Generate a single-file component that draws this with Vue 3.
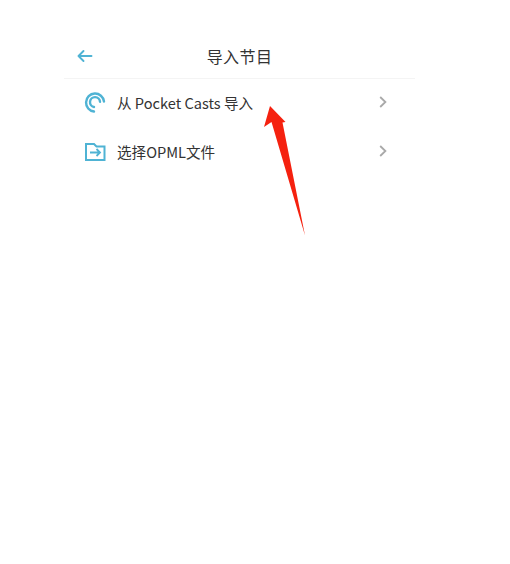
<script setup>
const rows = [
  { id: 'pc', label: '从 Pocket Casts 导入' },
  { id: 'opml', label: '选择OPML文件' },
]
</script>

<template>
  <div class="page">
    <div class="panel">
      <header class="head">
        <svg class="back" width="18" height="14" viewBox="0 0 18 14">
          <path d="M15.5 7H2.5M7.5 2L2.5 7L7.5 12" fill="none" stroke="#4fb3d4" stroke-width="1.9" stroke-linecap="round" stroke-linejoin="round" />
        </svg>
        <span class="title">导入节目</span>
      </header>
      <ul class="list">
        <li v-for="r in rows" :key="r.id" class="row">
          <svg v-if="r.id === 'pc'" class="icon" width="22" height="22" viewBox="0 0 22 22">
            <path d="M10 20.5A9 9 0 1 1 20 10.5" fill="none" stroke="#4fb3d4" stroke-width="2.4" stroke-linecap="round" />
            <path d="M10 16A5 5 0 1 1 16 10.8" fill="none" stroke="#4fb3d4" stroke-width="2.4" stroke-linecap="round" />
          </svg>
          <svg v-else class="icon" width="22" height="22" viewBox="0 0 22 22">
            <path d="M2 20V4H10L12.5 6.5H20.5V20Z" fill="none" stroke="#4fb3d4" stroke-width="2" stroke-linejoin="miter" />
            <path d="M6 12.5H16M12.5 9L16 12.5L12.5 16" fill="none" stroke="#4fb3d4" stroke-width="1.8" />
          </svg>
          <span class="label">{{ r.label }}</span>
          <svg class="chev" width="8" height="12" viewBox="0 0 8 12">
            <path d="M1.2 1L6.4 6L1.2 11" fill="none" stroke="#a9a9a9" stroke-width="1.8" />
          </svg>
        </li>
      </ul>
    </div>
    <svg class="arrow" width="50" height="135" viewBox="0 0 50 135">
      <path d="M10 1L4 22L11.5 17L45 130.5L22.5 17.5L25.5 17Z" fill="#f5210f" />
    </svg>
  </div>
</template>

<style scoped>
.page {
  position: relative;
  width: 510px;
  height: 564px;
  background: #fff;
  overflow: hidden;
  font-family: "Noto Sans CJK SC", "Noto Sans", sans-serif;
}
.panel {
  width: 351px;
  margin-left: 64px;
  padding-top: 35px;
}
.head {
  position: relative;
  height: 43px;
  display: flex;
  align-items: center;
  justify-content: center;
  border-bottom: 1px solid #f4f4f4;
}
.back {
  position: absolute;
  left: 12px;
  top: 14px;
}
.title {
  font-size: 16px;
  color: #333;
  letter-spacing: 0.4px;
  padding-bottom: 1px;
}
.list {
  list-style: none;
  margin: 0;
  padding: 0;
}
.row {
  box-sizing: border-box;
  height: 49px;
  display: flex;
  align-items: center;
  padding: 0 28px 3px 20px;
}
.icon {
  flex: none;
  margin-right: 11px;
}
.label {
  flex: 1;
  font-size: 14.6px;
  color: #333;
}
.chev {
  flex: none;
}
.arrow {
  position: absolute;
  left: 260px;
  top: 105px;
}
</style>

<style>
html, body { background: #fff; }
</style>
